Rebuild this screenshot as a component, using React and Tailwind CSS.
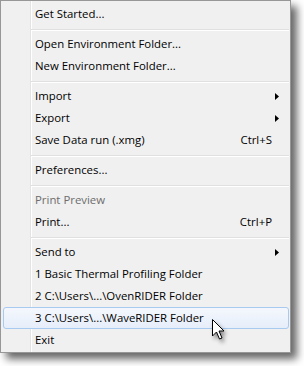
const ROWS = [
  { label: "Get Started..." },
  { sep: true },
  { label: "Open Environment Folder..." },
  { label: "New Environment Folder..." },
  { sep: true },
  { label: "Import", sub: true },
  { label: "Export", sub: true },
  { label: "Save Data run (.xmg)", key: "Ctrl+S" },
  { sep: true },
  { label: "Preferences..." },
  { sep: true },
  { label: "Print Preview", disabled: true },
  { label: "Print...", key: "Ctrl+P" },
  { sep: true },
  { label: "Send to", sub: true },
  { label: "1 Basic Thermal Profiling Folder" },
  { label: "2 C:\\Users\\...\\OvenRIDER Folder" },
  { label: "3 C:\\Users\\...\\WaveRIDER Folder", hot: true },
  { label: "Exit" },
];

function Arrow() {
  return (
    <svg width="4" height="7" viewBox="0 0 4 7" className="block">
      <path d="M0 0 L4 3.5 L0 7 Z" fill="#000" />
    </svg>
  );
}

function Row({ row }) {
  if (row.sep) {
    return (
      <div className="h-[8px] pt-[4px] pl-[28px]">
        <div className="h-[1px] bg-[#e0e0e0]" />
        <div className="h-[1px] bg-white" />
      </div>
    );
  }
  return (
    <div
      className={
        "h-[22px] flex items-center pl-[31px] pr-[9px] rounded-[3px] border " +
        (row.hot
          ? "border-[#a8caf0] bg-[linear-gradient(#f4f8fd,#e6eefa)]"
          : "border-transparent")
      }
    >
      <span
        className={"flex-1 " + (row.disabled ? "text-[#6d6d6d]" : "text-black")}
      >
        {row.label}
      </span>
      {row.key && <span className="mr-[7px] text-black">{row.key}</span>}
      {row.sub && <Arrow />}
    </div>
  );
}

export default function App() {
  return (
    <div className="relative w-[304px] h-[366px] bg-white font-['Open_Sans',sans-serif] text-[11.4px] leading-none">
      <div className="w-[291px] h-[353px] border border-[#979797] bg-[#f0f0f0] bg-[linear-gradient(to_right,#f0f0f0_29px,#e2e3e3_29px,#e2e3e3_30px,#ffffff_30px,#ffffff_31px,#f0f0f0_31px)] shadow-[6px_6px_8px_rgba(0,0,0,0.6)] pt-[2px] pl-[2px] pr-[1px]">
        {ROWS.map((r, i) => (
          <Row key={i} row={r} />
        ))}
      </div>

      {/* mouse pointer */}
      <svg
        width="14"
        height="22"
        viewBox="0 0 14 22"
        className="absolute left-[212px] top-[319px] drop-shadow-[2px_3px_2px_rgba(0,0,0,0.45)]"
      >
        <path
          d="M0.5 0.5 L0.5 17 L4.5 13 L7.5 20 L10 19 L7 12 L12 12 Z"
          fill="#fff"
          stroke="#000"
          strokeWidth="1"
          strokeLinejoin="miter"
        />
      </svg>
    </div>
  );
}
